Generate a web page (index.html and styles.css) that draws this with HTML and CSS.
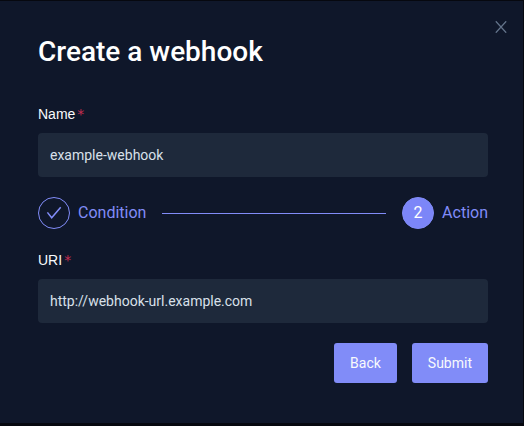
FILE: index.html
```html
<!DOCTYPE html>
<html lang="en">
<head>
<meta charset="utf-8">
<title>Create a webhook</title>
<link rel="stylesheet" href="styles.css">
</head>
<body>
<main class="modal">
  <button class="close" aria-label="Close"><svg width="12" height="12" viewBox="0 0 12 12"><path d="M.8 .3 11.2 11.7M11.2 .3 .8 11.7"/></svg></button>
  <h1 class="title">Create a webhook</h1>
  <form class="form">
    <label class="label" for="name">Name<span class="required">*</span></label>
    <input class="input" id="name" value="example-webhook">
    <div class="steps">
      <div class="step">
        <span class="marker"><svg width="16" height="16" viewBox="0 0 16 16"><path d="M1.4 7.4 5.7 12.8 14.7 2.2"/></svg></span>
        <span>Condition</span>
      </div>
      <div class="line"></div>
      <div class="step">
        <span class="marker active">2</span>
        <span>Action</span>
      </div>
    </div>
    <label class="label" for="uri">URI<span class="required">*</span></label>
    <input class="input" id="uri" value="http://webhook-url.example.com">
    <div class="actions">
      <button class="button" type="button">Back</button>
      <button class="button" type="button">Submit</button>
    </div>
  </form>
</main>
</body>
</html>
```
FILE: styles.css
```css
* { box-sizing: border-box; }
body {
  margin: 0;
  height: 426px;
  padding: 1px 1px 3px 0;
  overflow: hidden;
  background: #06080f;
  font: 14px/20px Roboto, sans-serif;
}
.modal {
  position: relative;
  height: 422px;
  padding: 31px 35px 0 38px;
  background: #0f172a;
}
.close {
  position: absolute;
  top: 20px;
  right: 16px;
  width: 12px;
  height: 12px;
  padding: 0;
  border: 0;
  background: none;
}
.close svg, .marker svg { display: block; fill: none; }
.close svg { stroke: #64748b; stroke-width: 1.3; }
.title {
  margin: 0 0 32px;
  color: #fff;
  font-size: 28px;
  font-weight: 500;
  line-height: 40px;
}
.form { display: flex; flex-direction: column; }
.label {
  display: flex;
  height: 20px;
  margin-bottom: 9px;
  color: #f8fafc;
  font-family: "Liberation Sans", sans-serif;
}
.required {
  margin-left: 2px;
  color: #c42d50;
  font-family: "DejaVu Sans", sans-serif;
}
.input {
  width: 100%;
  height: 44px;
  padding: 0 12px;
  border: 0;
  border-radius: 4px;
  outline: 0;
  background: #1e293b;
  color: #d9e0ea;
  font: inherit;
}
.steps {
  display: flex;
  align-items: center;
  gap: 16px;
  margin: 20px 0 21px;
  color: #818cf8;
  font-size: 16px;
}
.step { display: flex; align-items: center; gap: 8px; }
.marker {
  display: grid;
  place-items: center;
  width: 32px;
  height: 32px;
  border: 1px solid #818cf8;
  border-radius: 50%;
}
.marker svg { stroke: #818cf8; stroke-width: 1.5; }
.marker.active { background: #7c86f8; color: #fff; }
.line { flex: 1; height: 1px; background: #818cf8; }
.actions {
  display: flex;
  justify-content: flex-end;
  gap: 15px;
  margin-top: 20px;
}
.button {
  height: 40px;
  padding: 0 16px;
  border: 0;
  border-radius: 3px;
  background: #818cf8;
  color: #f8fafc;
  font: inherit;
}
```
